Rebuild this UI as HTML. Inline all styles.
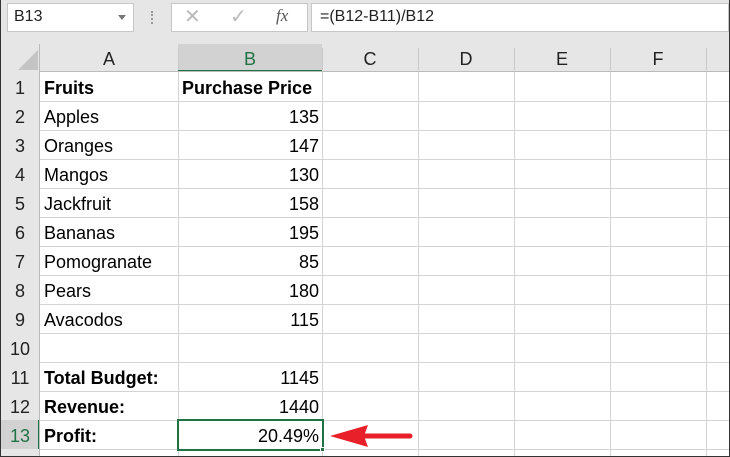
<!DOCTYPE html><html><head><style>
body{margin:0;width:730px;height:457px;overflow:hidden;background:#fff;font-family:"Liberation Sans",sans-serif;position:relative}
.a{position:absolute;box-sizing:border-box}
.c{position:absolute;font-size:18px;line-height:30px;color:#000;white-space:nowrap}
.b{font-weight:bold}
.r{text-align:right}
.hl{position:absolute;height:1px;background:#d4d4d4;left:40px;width:690px}
.vl{position:absolute;width:1px;background:#d4d4d4;top:72px;height:385px}
.rh{position:absolute;left:0;width:40px;text-align:center;font-size:18px;line-height:30px;color:#222}
.ch{position:absolute;top:44px;height:28px;line-height:30px;text-align:center;font-size:18px;color:#222}
</style></head><body>
<div class="a" style="left:0;top:0;width:730px;height:72px;background:#e6e6e6"></div>
<div class="a" style="left:0;top:0;width:40px;height:457px;background:#e6e6e6"></div>
<div class="a" style="left:7px;top:3px;width:127px;height:29px;background:#fff;border:1px solid #c6c6c6"></div>
<div class="c" style="left:14px;top:2px;font-size:16px;color:#222">B13</div>
<div class="a" style="left:118px;top:15px;width:0;height:0;border-left:4px solid transparent;border-right:4px solid transparent;border-top:5px solid #777"></div>
<div class="a" style="left:151px;top:11px;width:2px;height:13px;border-left:2px dotted #999"></div>
<div class="a" style="left:171px;top:3px;width:137px;height:29px;background:#fff;border:1px solid #c6c6c6"></div>
<div class="c" style="left:184px;top:2px;font-size:20px;color:#bbb">✕</div>
<div class="c" style="left:230px;top:2px;font-size:20px;color:#bbb">✓</div>
<div class="c" style="left:276px;top:1px;font-size:17px;color:#555;font-family:'Liberation Serif',serif;font-style:italic">fx</div>
<div class="a" style="left:311px;top:3px;width:418px;height:29px;background:#fff;border:1px solid #c6c6c6"></div>
<div class="c" style="left:320px;top:2px;font-size:16px;color:#222">=(B12-B11)/B12</div>
<div class="a" style="left:178px;top:44px;width:144px;height:28px;background:#d2d2d2;border-bottom:2px solid #217346"></div>
<div class="a" style="left:0;top:420px;width:40px;height:29px;background:#d2d2d2;border-right:2px solid #217346"></div>
<div class="a" style="left:40px;top:71px;width:690px;height:1px;background:#bbb"></div>
<div class="a" style="left:39px;top:44px;width:1px;height:413px;background:#bbb"></div>
<div class="ch" style="left:40px;width:138px">A</div>
<div class="ch" style="left:178px;width:144px;color:#217346">B</div>
<div class="ch" style="left:322px;width:96px">C</div>
<div class="ch" style="left:418px;width:96px">D</div>
<div class="ch" style="left:514px;width:96px">E</div>
<div class="ch" style="left:610px;width:96px">F</div>
<div class="a" style="left:178px;top:48px;width:1px;height:22px;background:#c8c8c8"></div>
<div class="a" style="left:322px;top:48px;width:1px;height:22px;background:#c8c8c8"></div>
<div class="a" style="left:418px;top:48px;width:1px;height:22px;background:#c8c8c8"></div>
<div class="a" style="left:514px;top:48px;width:1px;height:22px;background:#c8c8c8"></div>
<div class="a" style="left:610px;top:48px;width:1px;height:22px;background:#c8c8c8"></div>
<div class="a" style="left:706px;top:48px;width:1px;height:22px;background:#c8c8c8"></div>
<svg class="a" style="left:18px;top:50px" width="20" height="20"><polygon points="20,0 20,20 0,20" fill="#c4c4c4"/></svg>
<div class="vl" style="left:178px"></div><div class="vl" style="left:322px"></div><div class="vl" style="left:418px"></div><div class="vl" style="left:514px"></div><div class="vl" style="left:610px"></div><div class="vl" style="left:706px"></div>
<div class="hl" style="top:101px"></div><div class="hl" style="top:130px"></div><div class="hl" style="top:159px"></div><div class="hl" style="top:188px"></div><div class="hl" style="top:217px"></div><div class="hl" style="top:246px"></div><div class="hl" style="top:275px"></div><div class="hl" style="top:304px"></div><div class="hl" style="top:333px"></div><div class="hl" style="top:362px"></div><div class="hl" style="top:391px"></div><div class="hl" style="top:420px"></div><div class="hl" style="top:449px"></div>
<div class="rh" style="top:73px">1</div><div class="rh" style="top:102px">2</div><div class="rh" style="top:131px">3</div><div class="rh" style="top:160px">4</div><div class="rh" style="top:189px">5</div><div class="rh" style="top:218px">6</div><div class="rh" style="top:247px">7</div><div class="rh" style="top:276px">8</div><div class="rh" style="top:305px">9</div><div class="rh" style="top:334px">10</div><div class="rh" style="top:363px">11</div><div class="rh" style="top:392px">12</div><div class="rh" style="top:421px;color:#217346">13</div>
<div class="c b" style="left:44px;top:73px">Fruits</div><div class="c b" style="left:182px;top:73px">Purchase Price</div>
<div class="c" style="left:44px;top:102px">Apples</div><div class="c r" style="right:411px;top:102px">135</div>
<div class="c" style="left:44px;top:131px">Oranges</div><div class="c r" style="right:411px;top:131px">147</div>
<div class="c" style="left:44px;top:160px">Mangos</div><div class="c r" style="right:411px;top:160px">130</div>
<div class="c" style="left:44px;top:189px">Jackfruit</div><div class="c r" style="right:411px;top:189px">158</div>
<div class="c" style="left:44px;top:218px">Bananas</div><div class="c r" style="right:411px;top:218px">195</div>
<div class="c" style="left:44px;top:247px">Pomogranate</div><div class="c r" style="right:411px;top:247px">85</div>
<div class="c" style="left:44px;top:276px">Pears</div><div class="c r" style="right:411px;top:276px">180</div>
<div class="c" style="left:44px;top:305px">Avacodos</div><div class="c r" style="right:411px;top:305px">115</div>
<div class="c b" style="left:44px;top:363px">Total Budget:</div><div class="c r" style="right:411px;top:363px">1145</div>
<div class="c b" style="left:44px;top:392px">Revenue:</div><div class="c r" style="right:411px;top:392px">1440</div>
<div class="c b" style="left:44px;top:421px">Profit:</div>
<div class="a" style="left:177px;top:419px;width:147px;height:32px;border:2px solid #217346"></div>
<div class="a" style="left:320px;top:447px;width:5px;height:5px;background:#217346;border:1px solid #fff"></div>
<div class="c r" style="right:411px;top:421px">20.49%</div>
<svg class="a" style="left:328px;top:420px" width="90" height="32"><path d="M36 16 H82" stroke="#e8202a" stroke-width="5" stroke-linecap="round"/><polygon points="2,16 40,5 36,16 40,27" fill="#e8202a"/></svg>
<div class="a" style="left:0;top:0;width:730px;height:457px;border:1px solid #333;border-top:0"></div>
</body></html>
